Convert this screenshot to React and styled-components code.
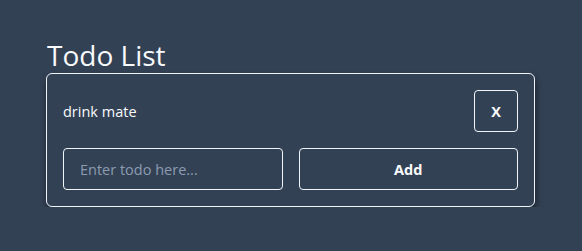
import React, { useState } from "react";
import styled, { createGlobalStyle } from "styled-components";

const GlobalStyle = createGlobalStyle`
    html, body {
        margin: 0;
        padding: 0;
        background-color: #334155;
        font-family: "Open Sans", "Noto Sans", sans-serif;
        color: #f8fafc;
    }
`;

const Page = styled.div`
    display: flex;
    padding: 37px 0 0 46px;
`;

const Wrapper = styled.div`
    width: 489px;
    display: flex;
    flex-direction: column;
`;

const Title = styled.h1`
    margin: 0;
    font-size: 28px;
    font-weight: 400;
    line-height: 36px;
    padding-left: 1px;
`;

const Card = styled.div`
    border: 1px solid #f1f5f9;
    border-radius: 6px;
    padding: 16px;
    display: flex;
    flex-direction: column;
    gap: 16px;
    box-shadow: 1px 4px 6px rgba(0, 0, 0, 0.5);
`;

const Row = styled.div`
    display: flex;
    align-items: center;
    justify-content: space-between;
    gap: 16px;
`;

const TodoText = styled.span`
    font-size: 14.5px;
`;

const Button = styled.button`
    background: transparent;
    border: 1px solid #f1f5f9;
    border-radius: 4px;
    padding: 0 16px;
    color: #f8fafc;
    font-family: inherit;
    font-weight: 700;
    font-size: 14.5px;
    height: 42px;
    width: ${({ $wide }) => ($wide ? "auto" : "44px")};
    flex: ${({ $wide }) => ($wide ? "1 1 0" : "none")};
    cursor: pointer;
    box-sizing: border-box;
`;

const Input = styled.input`
    flex: 1 1 0;
    min-width: 0;
    height: 42px;
    box-sizing: border-box;
    background: transparent;
    border: 1px solid #f1f5f9;
    border-radius: 4px;
    padding: 0 16px;
    color: #f8fafc;
    font-family: inherit;
    font-size: 14.5px;
    outline: none;

    &::placeholder {
        color: #8c9bb0;
    }
`;

export default function App() {
    const [todos, setTodos] = useState(["drink mate"]);
    const [value, setValue] = useState("");

    const addTodo = () => {
        if (!value.trim()) return;
        setTodos([...todos, value.trim()]);
        setValue("");
    };

    return (
        <>
            <GlobalStyle />
            <Page>
                <Wrapper>
                    <Title>Todo List</Title>
                    <Card>
                        {todos.map((todo, index) => (
                            <Row key={index}>
                                <TodoText>{todo}</TodoText>
                                <Button onClick={() => setTodos(todos.filter((_, i) => i !== index))}>X</Button>
                            </Row>
                        ))}
                        <Row>
                            <Input
                                placeholder="Enter todo here..."
                                value={value}
                                onChange={(e) => setValue(e.target.value)}
                            />
                            <Button $wide onClick={addTodo}>Add</Button>
                        </Row>
                    </Card>
                </Wrapper>
            </Page>
        </>
    );
}
